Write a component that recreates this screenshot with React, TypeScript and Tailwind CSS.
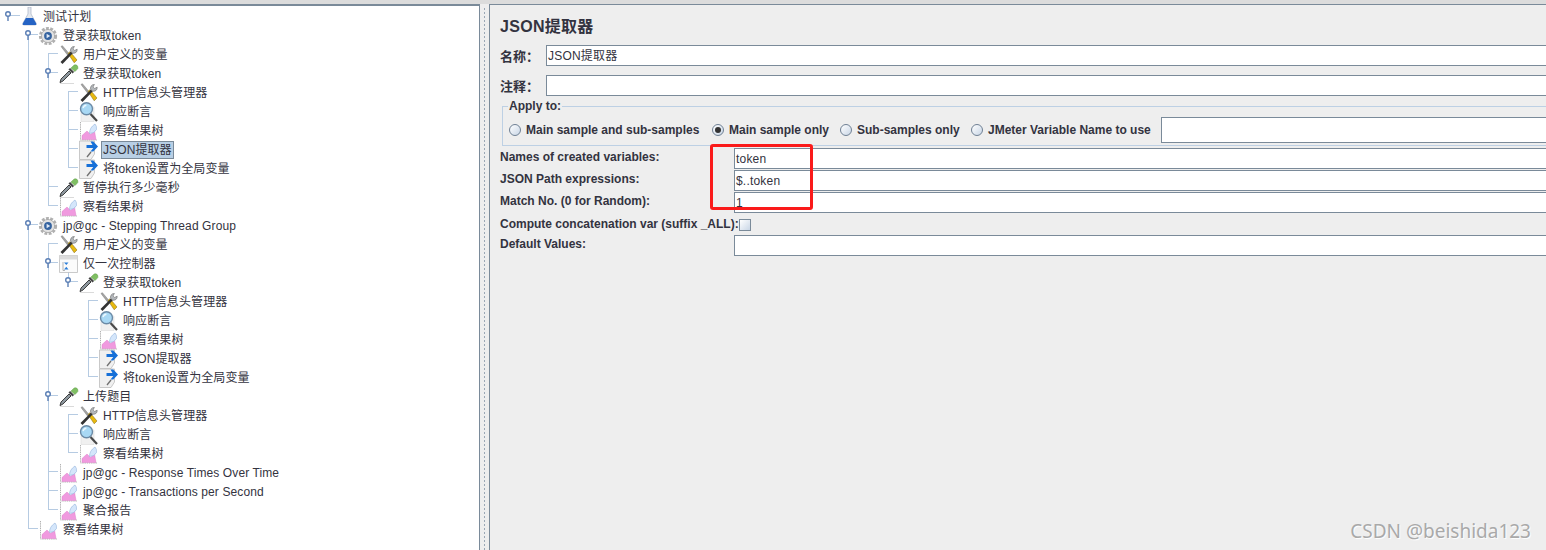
const TEXT_FONT = "font-['Liberation_Sans','Noto_Sans_CJK_SC',sans-serif]";

type IconKind = 'flask' | 'gear' | 'tools' | 'dropper' | 'lens' | 'chart' | 'post' | 'once';

const rows: { depth: number; icon: IconKind; label: string; selected?: boolean }[] = [
  { depth: 0, icon: 'flask', label: '测试计划' },
  { depth: 1, icon: 'gear', label: '登录获取token' },
  { depth: 2, icon: 'tools', label: '用户定义的变量' },
  { depth: 2, icon: 'dropper', label: '登录获取token' },
  { depth: 3, icon: 'tools', label: 'HTTP信息头管理器' },
  { depth: 3, icon: 'lens', label: '响应断言' },
  { depth: 3, icon: 'chart', label: '察看结果树' },
  { depth: 3, icon: 'post', label: 'JSON提取器', selected: true },
  { depth: 3, icon: 'post', label: '将token设置为全局变量' },
  { depth: 2, icon: 'dropper', label: '暂停执行多少毫秒' },
  { depth: 2, icon: 'chart', label: '察看结果树' },
  { depth: 1, icon: 'gear', label: 'jp@gc - Stepping Thread Group' },
  { depth: 2, icon: 'tools', label: '用户定义的变量' },
  { depth: 2, icon: 'once', label: '仅一次控制器' },
  { depth: 3, icon: 'dropper', label: '登录获取token' },
  { depth: 4, icon: 'tools', label: 'HTTP信息头管理器' },
  { depth: 4, icon: 'lens', label: '响应断言' },
  { depth: 4, icon: 'chart', label: '察看结果树' },
  { depth: 4, icon: 'post', label: 'JSON提取器' },
  { depth: 4, icon: 'post', label: '将token设置为全局变量' },
  { depth: 2, icon: 'dropper', label: '上传题目' },
  { depth: 3, icon: 'tools', label: 'HTTP信息头管理器' },
  { depth: 3, icon: 'lens', label: '响应断言' },
  { depth: 3, icon: 'chart', label: '察看结果树' },
  { depth: 2, icon: 'chart', label: 'jp@gc - Response Times Over Time' },
  { depth: 2, icon: 'chart', label: 'jp@gc - Transactions per Second' },
  { depth: 2, icon: 'chart', label: '聚合报告' },
  { depth: 1, icon: 'chart', label: '察看结果树' },
];

const depthPadding = ['pl-[18px]', 'pl-[38px]', 'pl-[58px]', 'pl-[78px]', 'pl-[98px]'];

function TreeIcon({ kind }: { kind: IconKind }) {
  return (
    <svg width="22" height="20" viewBox="0 0 22 20" className="shrink-0">
      {kind === 'flask' && (
        <>
          <path d="M10 0h3v7l5 9q1 2-1 2H6q-2 0-1-2l5-9z" fill="#e4e8ee" stroke="#a9b3c4" strokeWidth="0.7" />
          <path d="M8 11h7l3 5q1 2-1 2H6q-2 0-1-2z" fill="#2563c4" />
        </>
      )}
      {kind === 'gear' && (
        <>
          <circle cx="10" cy="10" r="7.6" fill="none" stroke="#b0b0b0" strokeWidth="3" strokeDasharray="2.8 1.4" />
          <circle cx="10" cy="10" r="6.6" fill="#e2e2e2" stroke="#a0a0a0" strokeWidth="0.7" />
          <circle cx="10" cy="10" r="3.9" fill="#35639f" />
          <path d="M8.6 7.8l3.6 2.200-3.600 2.200z" fill="#dfe9f6" />
        </>
      )}
      {kind === 'tools' && (
        <>
          <path d="M3 1.500l1.400-.8L11 8.500l-1.500 1.500z" fill="#a5a5a5" stroke="#666" strokeWidth="0.4" />
          <path d="M10 8.500l2-1.800 7 8.300-2.800 2.800z" fill="#e8b90f" stroke="#7a6410" strokeWidth="0.5" />
          <path d="M2.500 17L13 6.500l1.800 1.800L4.500 19z" fill="#333" />
          <path d="M13 7a3.600 3.600 0 0 1 3.400-5.500l-1.400 2.400 1.600 1.500 2.600-1.200a3.600 3.600 0 0 1-5 3.800z" fill="#b4b8bc" stroke="#555" strokeWidth="0.5" />
        </>
      )}
      {kind === 'dropper' && (
        <>
          <path d="M2 18.600l1-3.600L11 7l2 2-8 8z" fill="#8d979e" stroke="#2f2f2f" strokeWidth="0.9" />
          <path d="M10.500 5.500l4 4 1.600-1.600-4-4z" fill="#444" />
          <path d="M13 4l3.200-3q2-.6 3 .6t.6 3L17 7.600z" fill="#7fbf62" stroke="#5d9a45" strokeWidth="0.5" />
          <path d="M2 19.500h14" stroke="#d0d0d0" strokeWidth="0.8" />
        </>
      )}
      {kind === 'lens' && (
        <>
          <path d="M3 5h13v14.500H3z" fill="#f0f0f0" stroke="#dcdcdc" strokeWidth="0.6" />
          <path d="M12.500 12l6.500 7" stroke="#4a4a4a" strokeWidth="2.200" />
          <circle cx="8.500" cy="6.800" r="6" fill="#a8d8f4" stroke="#6b8aa6" strokeWidth="1.400" />
          <path d="M5 6.200a4 4 0 0 1 3.400-3" stroke="#ecf8ff" strokeWidth="1.400" fill="none" />
        </>
      )}
      {kind === 'chart' && (
        <>
          <path d="M2.500 1v18H19" fill="none" stroke="#a8a8a8" strokeWidth="0.9" strokeDasharray="1.400 0.800" />
          <path d="M4 18.500v-4l5-4.500 3.500 3.500 4-3.500 1.500 8.500z" fill="#f09adf" stroke="#d873c2" strokeWidth="0.4" />
          <path d="M11.500 12.500q0-6 5.500-9.500 2 2 1.500 5.500-2 4-7 4z" fill="#d4e6fb" stroke="#93b4dc" strokeWidth="0.6" />
        </>
      )}
      {kind === 'post' && (
        <>
          <path d="M1.500 1h15v13l-3.500 5.500H1.500z" fill="#f0f0f0" stroke="#bdbdbd" strokeWidth="0.8" />
          <path d="M9 17l4-5" stroke="#707070" strokeWidth="1.300" />
          <path d="M12.500 1.500h2.800L20 6.500l-4.700 5h-2.800l2.800-3.500H8.500V5h6z" fill="#1670d8" />
        </>
      )}
      {kind === 'once' && (
        <>
          <path d="M1.500 1.500h18v17h-18z" fill="#fbfbfb" stroke="#bcbcbc" strokeWidth="0.8" />
          <path d="M1.500 1.500h18v4h-18z" fill="#dcdcdc" />
          <path d="M6 8.500h4.500l-2.200 2.600zM6 15.500l2.300-2.800 2.200 2.800z" fill="#2d7ed8" />
          <path d="M5 8v8.500h2" fill="none" stroke="#999" strokeWidth="0.7" />
        </>
      )}
    </svg>
  );
}

// connector lines and expand handles of the tree, in screen coordinates
function TreeLines() {
  const v = 'M28 34v494M48 53v152M48 243v266M68 91v76M68 262v19M88 300v76M68 414v38';
  const h =
    'M8 15h12M28 34h10M48 53h10M48 72h10M68 91h10M68 110h10M68 129h10M68 148h10M68 167h10M48 186h10M48 205h10M28 224h10M48 243h10M48 262h10M68 281h10M88 300h10M88 319h10M88 338h10M88 357h10M88 376h10M48 395h10M68 414h10M68 433h10M68 452h10M48 471h10M48 490h10M48 509h10M28 528h10';
  const handles = [
    [8, 15],
    [28, 34],
    [48, 72],
    [28, 224],
    [48, 262],
    [68, 281],
    [48, 395],
  ];
  return (
    <svg width="110" height="550" className="absolute left-0 top-[-6px]">
      <path d={v} fill="none" stroke="#b6cbe2" strokeWidth="1" shapeRendering="crispEdges" />
      <path d={h} fill="none" stroke="#b6cbe2" strokeWidth="1" shapeRendering="crispEdges" />
      {handles.map(([x, y]) => (
        <g key={`${x}-${y}`}>
          <path d={`M${x} ${y}v6`} stroke="#5b7fb5" strokeWidth="1.400" />
          <circle cx={x} cy={y - 1} r="2.300" fill="#fff" stroke="#5b7fb5" strokeWidth="1.400" />
        </g>
      ))}
    </svg>
  );
}

function TreeRow({ depth, icon, label, selected }: (typeof rows)[number]) {
  return (
    <div className={`flex h-[19px] items-center gap-px ${depthPadding[depth]}`}>
      <TreeIcon kind={icon} />
      <span
        className={`border px-px text-[12px] leading-[16px] tracking-[0.1px] whitespace-nowrap text-[#333340] ${
          selected ? 'border-[#7a8a99] bg-[#b8cfe5]' : 'border-transparent'
        }`}
      >
        {label}
      </span>
    </div>
  );
}

function Field({ value, className }: { value?: string; className: string }) {
  return (
    <div
      className={`flex h-[21px] items-center border border-r-0 border-[#7a8a99] bg-white pl-[1px] text-[12px] tracking-[0.2px] text-[#333340] ${className}`}
    >
      {value}
    </div>
  );
}

function Radio({ label, checked, className }: { label: string; checked?: boolean; className: string }) {
  return (
    <label className={`flex shrink-0 items-center gap-[5px] ${className}`}>
      <span className="flex size-[12px] items-center justify-center rounded-full border border-[#6f8094] bg-gradient-to-br from-white to-[#c9d6e6]">
        {checked && <span className="size-[6px] rounded-full bg-[#333]" />}
      </span>
      <span className="text-[12px] font-bold whitespace-nowrap text-[#333340]">{label}</span>
    </label>
  );
}

function LabeledField({ label, value, className = '' }: { label: string; value?: string; className?: string }) {
  return (
    <div className={`flex items-start ${className}`}>
      <span className="w-[234px] shrink-0 pt-px text-[12px] leading-[16px] font-bold text-[#333340]">{label}</span>
      <Field value={value} className="flex-1" />
    </div>
  );
}

export default function App() {
  return (
    <div className={`relative flex h-[550px] w-[1546px] flex-col overflow-hidden bg-[#eeeeee] ${TEXT_FONT}`}>
      <div className="h-[4px] shrink-0 bg-[#dcdcdc]" />
      <div className="flex min-h-0 flex-1">
        <div className="relative w-[480px] shrink-0 border-t-2 border-r border-[#7a8a99] bg-white pt-px">
          <TreeLines />
          <div className="relative">
            {rows.map((row, i) => (
              <TreeRow key={i} {...row} />
            ))}
          </div>
        </div>
        <div className="flex w-[9px] shrink-0 flex-col items-center bg-[#eeeeee]">
          <div className="mt-[3px] h-full w-[3px] bg-[radial-gradient(#9aa7b5_1px,transparent_1px)] bg-[length:3px_4px]" />
        </div>
        <div className="min-w-0 flex-1 border-t border-l border-[#7a8a99] bg-[#eeeeee] pt-[12px] pl-[10px]">
          <h1 className="h-[20px] text-[16px] leading-[20px] font-bold tracking-[0.3px] text-[#333340]">JSON提取器</h1>
          <div className="mt-[8px] flex items-center">
            <span className="w-[46px] pt-[2px] text-[13px] font-bold text-[#333340]">名称：</span>
            <Field value="JSON提取器" className="flex-1" />
          </div>
          <div className="mt-[8px] flex items-center">
            <span className="w-[46px] pt-[2px] text-[13px] font-bold text-[#333340]">注释：</span>
            <Field className="flex-1" />
          </div>
          <div className="relative mt-[10px] ml-[2px] h-[40px] border-t border-b border-l border-[#bdd0e4]">
            <span className="absolute top-[-8px] left-[5px] bg-[#eeeeee] px-px text-[12px] leading-[14px] font-bold text-[#333340]">
              Apply to:
            </span>
            <div className="flex h-full items-center pt-[8px] pl-[6px]">
              <Radio label="Main sample and sub-samples" className="w-[203px]" />
              <Radio label="Main sample only" checked className="w-[128px]" />
              <Radio label="Sub-samples only" className="w-[131px]" />
              <Radio label="JMeter Variable Name to use" className="w-[190px]" />
              <div className="h-[26px] flex-1 border-t border-b border-l border-[#7a8a99] bg-white" />
            </div>
          </div>
          <div className="mt-[2px] flex flex-col gap-px">
            <LabeledField label="Names of created variables:" value="token" />
            <LabeledField label="JSON Path expressions:" value="$..token" />
            <LabeledField label="Match No. (0 for Random):" value="1" />
          </div>
          <div className="mt-[2px] flex h-[17px] items-center">
            <span className="w-[239px] shrink-0 text-[12px] font-bold whitespace-nowrap text-[#333340]">
              Compute concatenation var (suffix _ALL):
            </span>
            <span className="mt-[2px] size-[12px] border border-[#7a8a99] bg-gradient-to-br from-white to-[#c9d6e6]" />
          </div>
          <LabeledField label="Default Values:" className="mt-[3px]" />
        </div>
      </div>
      {/* red annotation drawn on the screenshot */}
      <div className="absolute top-[144px] left-[710px] h-[66px] w-[103px] rounded-[3px] border-[3px] border-[#fa1a1a]" />
      <div className="absolute right-[15px] bottom-[7px] font-['Noto_Sans',sans-serif] text-[19px] leading-[24px] text-[#a9a9a9] [text-shadow:1px_1px_1px_#ffffff]">
        CSDN @beishida123
      </div>
    </div>
  );
}
